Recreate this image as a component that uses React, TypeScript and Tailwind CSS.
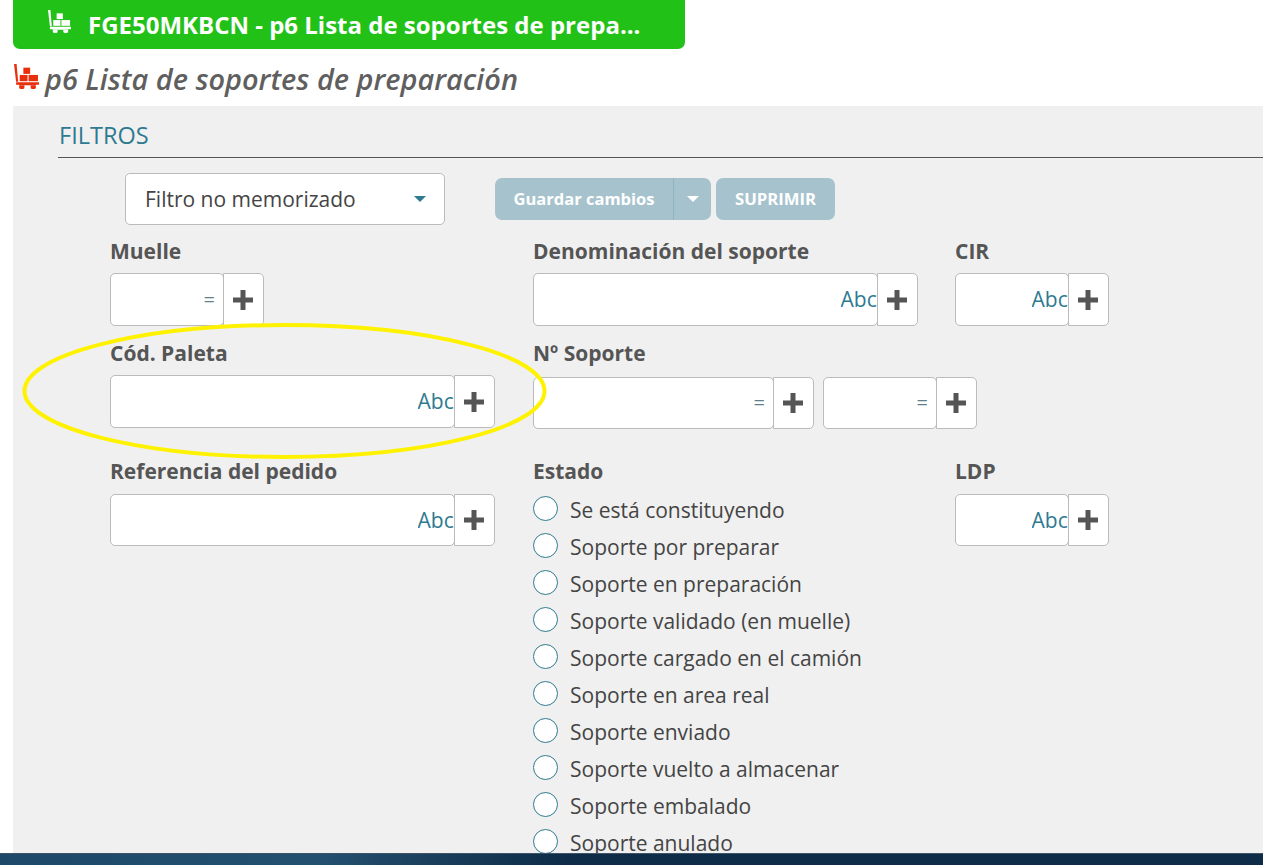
const Truck = ({ className }: { className: string }) => (
  <svg viewBox="0 0 24 24" className={className} fill="currentColor">
    <path d="M0 0h2.500l1.500 17H2z" />
    <rect x="9" y="3.500" width="6.500" height="6" />
    <rect x="5.500" y="10.500" width="7.500" height="6" />
    <rect x="14" y="10.500" width="9" height="6" />
    <path d="M2 17.500h22v2.500h-2.500L20 20.500h-14l-2-.5H2z" />
    <path d="M5 20.500h5v2.500l-1 1H6l-1-1z" />
    <path d="M16 20.500h5v2.500l-1 1h-3l-1-1z" />
  </svg>
);

const Field = ({ w, suffix, className = "" }: { w: string; suffix: string; className?: string }) => (
  <div className={`flex ${className}`}>
    <div className={`${w} bg-white border border-[#bbbbbb] rounded-[5px] flex items-center justify-end overflow-hidden`}>
      <span className={suffix === "=" ? "text-[20px] text-[#5f7f8a] pr-[8px]" : "text-[21px] text-[#2e7a90] whitespace-nowrap w-[36.500px] overflow-hidden pt-px"}>{suffix}</span>
    </div>
    <div className="w-[41px] -ml-px bg-white border border-[#bbbbbb] rounded-r-[5px] flex items-center justify-center pr-[2px]">
      <svg viewBox="0 0 20 20" className="w-[20px] h-[20px]" fill="#555555"><path d="M7.500 0h5v7.500H20v5h-7.500V20h-5v-7.500H0v-5h7.500z" /></svg>
    </div>
  </div>
);

const Label = ({ children }: { children: string }) => (
  <div className="text-[21px] leading-[24px] font-bold text-[#555555]">{children}</div>
);

const estados = [
  "Se está constituyendo",
  "Soporte por preparar",
  "Soporte en preparación",
  "Soporte validado (en muelle)",
  "Soporte cargado en el camión",
  "Soporte en area real",
  "Soporte enviado",
  "Soporte vuelto a almacenar",
  "Soporte embalado",
  "Soporte anulado",
];

export default function App() {
  return (
    <div className="relative h-[865px] overflow-hidden bg-white flex flex-col font-['Open_Sans',sans-serif]">
      <div className="ml-[13px] w-[672px] h-[49px] shrink-0 bg-[#22c118] rounded-b-[7px] flex items-center pl-[35px] pb-px text-white">
        <Truck className="w-[23px] h-[23px] mb-[5px]" />
        <span className="ml-[17px] pt-px text-[24px] leading-[30px] font-bold whitespace-nowrap">FGE50MKBCN - p6 Lista de soportes de prepa...</span>
      </div>
      <div className="h-[57px] shrink-0 flex items-center pl-[14px]">
        <Truck className="w-[25px] h-[25px] text-[#e8300e] mb-[3px]" />
        <h1 className="ml-[6px] pt-[2px] text-[28.900px] italic font-semibold text-[#5f5f5f] whitespace-nowrap">p6 Lista de soportes de preparación</h1>
      </div>
      <div className="flex-1 min-h-0 ml-[13px] bg-[#f0f0f0] overflow-hidden pl-[45px] pt-[15px]">
        <div className="text-[23.500px] leading-[28px] text-[#2e7a90] border-b border-[#555555] h-[37px] pl-px">FILTROS</div>
        <div className="ml-[67px] mt-[15px] flex items-start">
          <div className="w-[320px] h-[52px] bg-white border border-[#bbbbbb] rounded-[5px] flex items-center justify-between pl-[19px] pr-[18px] text-[21px] text-[#444444]">
            <span className="pt-[2px]">Filtro no memorizado</span>
            <span className="w-0 h-0 border-x-[6px] border-x-transparent border-t-[6px] border-t-[#2e7a90]" />
          </div>
          <div className="ml-[50px] mt-[5px] flex h-[42px] rounded-[7px] bg-[#a6c3cd] text-white text-[16.500px] font-bold">
            <span className="w-[179px] flex items-center justify-center border-r border-[#8fb5c1]">Guardar cambios</span>
            <span className="w-[37px] flex items-center justify-center">
              <span className="w-0 h-0 border-x-[6px] border-x-transparent border-t-[6px] border-t-white" />
            </span>
          </div>
          <div className="ml-[5px] mt-[5px] w-[119px] h-[42px] rounded-[7px] bg-[#a6c3cd] text-white text-[16.700px] font-bold flex items-center justify-center">SUPRIMIR</div>
        </div>
        <div className="ml-[52px] mt-[14px] grid grid-cols-[423px_422px_1fr]">
          <div>
            <Label>Muelle</Label>
            <Field w="w-[114px]" suffix="=" className="mt-[10px] h-[53px]" />
          </div>
          <div>
            <Label>Denominación del soporte</Label>
            <Field w="w-[345px]" suffix="Abc" className="mt-[10px] h-[53px]" />
          </div>
          <div>
            <Label>CIR</Label>
            <Field w="w-[114px]" suffix="Abc" className="mt-[10px] h-[53px]" />
          </div>
          <div className="mt-[15px]">
            <Label>Cód. Paleta</Label>
            <Field w="w-[345px]" suffix="Abc" className="mt-[10px] h-[53px]" />
          </div>
          <div className="mt-[15px] col-span-2">
            <Label>Nº Soporte</Label>
            <div className="flex mt-[12px] gap-[9px]">
              <Field w="w-[241px]" suffix="=" className="h-[52px]" />
              <Field w="w-[114px]" suffix="=" className="h-[52px]" />
            </div>
          </div>
          <div className="mt-[30px]">
            <Label>Referencia del pedido</Label>
            <Field w="w-[345px]" suffix="Abc" className="mt-[11px] h-[52px]" />
          </div>
          <div className="mt-[30px]">
            <Label>Estado</Label>
            <div className="mt-[8px] flex flex-col">
              {estados.map((e) => (
                <div key={e} className="h-[37px] flex items-center">
                  <span className="w-[25px] h-[25px] rounded-full bg-white border border-[#2e7a90] shrink-0 mb-[3px]" />
                  <span className="ml-[12px] mt-[2px] text-[21px] text-[#444444] whitespace-nowrap">{e}</span>
                </div>
              ))}
            </div>
          </div>
          <div className="mt-[30px]">
            <Label>LDP</Label>
            <Field w="w-[114px]" suffix="Abc" className="mt-[11px] h-[52px]" />
          </div>
        </div>
      </div>
      <div className="h-[12px] shrink-0 border-t border-[#3d5567] bg-gradient-to-r from-[#1d4868] via-[#24506f] via-25% to-[#0e2c47] to-45%" />
      <svg className="absolute left-[20px] top-[322px] w-[530px] h-[138px] pointer-events-none" viewBox="0 0 530 138" fill="none">
        <ellipse cx="264.500" cy="69" rx="260" ry="66" stroke="#fff200" strokeWidth="4" />
      </svg>
    </div>
  );
}
